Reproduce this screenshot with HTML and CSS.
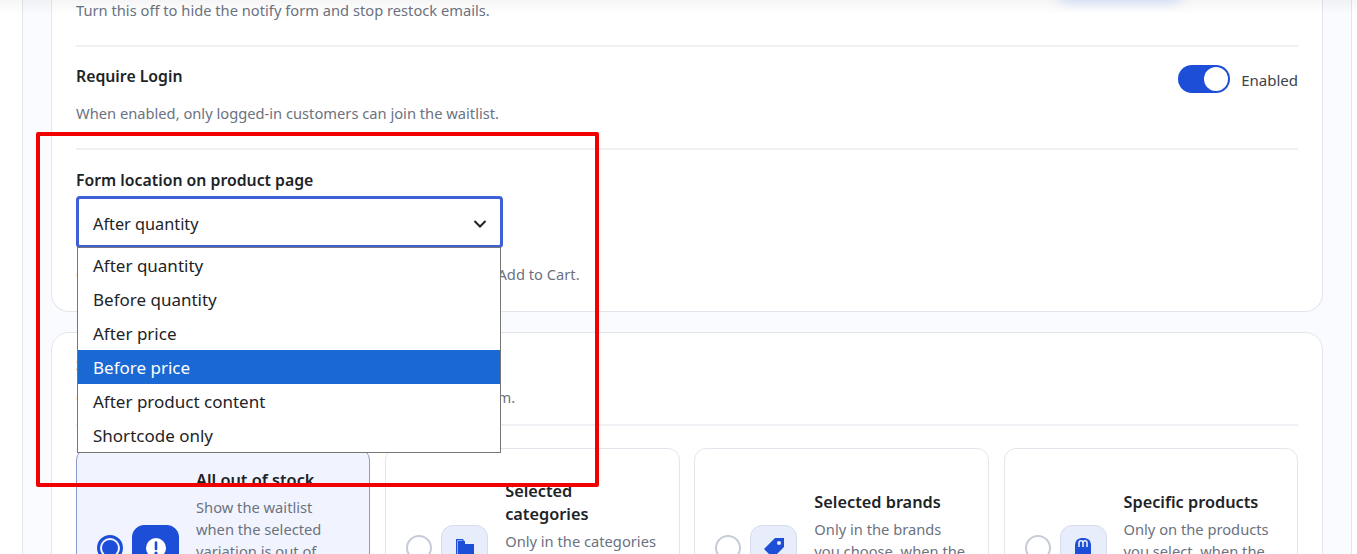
FILE: index.html
```html
<!DOCTYPE html>
<html>
<head>
<title>Waitlist Settings</title>
<link rel="stylesheet" href="styles.css">
</head>
<body>
<div class='top-fade'></div>
<div class='top-glow'></div>
<div class='panel'>
	<section class='card card-first'>
		<div class='row row-first'>
			<p class='desc'>Turn this off to hide the notify form and stop restock emails.</p>
		</div>
		<div class='row row-login'>
			<div class='row-head'>
				<h3 class='title'>Require Login</h3>
				<div class='switch-wrap'>
					<span class='switch'><span class='knob'></span></span>
					<span class='switch-label'>Enabled</span>
				</div>
			</div>
			<p class='desc'>When enabled, only logged-in customers can join the waitlist.</p>
		</div>
		<div class='row row-form'>
			<h3 class='title'>Form location on product page</h3>
			<div class='select-wrap'>
				<div class='select'>
					<span>After quantity</span>
					<svg class='chevron' width='16' height='16' viewBox='0 0 16 16'><path d='M2.5 5 8 10.500 13.500 5' fill='none' stroke='#1d2327' stroke-width='2'/></svg>
				</div>
				<ul class='options'>
					<li>After quantity</li>
					<li>Before quantity</li>
					<li>After price</li>
					<li class='active'>Before price</li>
					<li>After product content</li>
					<li>Shortcode only</li>
				</ul>
			</div>
			<p class='desc help'>Choose where the notify form shows, for example just above Add to Cart.</p>
		</div>
	</section>
	<section class='card card-second'>
		<div class='row row-scope'>
			<h3 class='title'>Show the waitlist for</h3>
			<p class='desc'>Choose which out-of-stock products can display the notify form.</p>
		</div>
		<div class='choices'>
			<div class='choice selected'>
				<span class='radio'></span>
				<span class='icon'>
					<svg width='20' height='20' viewBox='0 0 20 20'><circle cx='10' cy='10' r='10' fill='#fff'/><path d='M10 4.500v6.500' stroke='#1d4ed8' stroke-width='2.600' stroke-linecap='round'/><circle cx='10' cy='15' r='1.600' fill='#1d4ed8'/></svg>
				</span>
				<div class='choice-text'>
					<h4>All out of stock</h4>
					<p>Show the waitlist when the selected variation is out of stock on any product anywhere in your whole store.</p>
				</div>
			</div>
			<div class='choice'>
				<span class='radio'></span>
				<span class='icon'>
					<svg width='20' height='20' viewBox='0 0 20 20'><path d='M1 1h7l1 2h1v3h9v13H4V16H1z' fill='#1d4ed8'/><path d='M2.500 16V2.500h5' fill='none' stroke='#e8edfb' stroke-width='.6'/></svg>
				</span>
				<div class='choice-text'>
					<h4>Selected categories</h4>
					<p>Only in the categories you pick, when the product is out of stock.</p>
				</div>
			</div>
			<div class='choice'>
				<span class='radio'></span>
				<span class='icon'>
					<svg width='22' height='22' viewBox='0 0 22 22'><path d='M12 1h9v9L10 21 1 12z' fill='#1d4ed8'/><circle cx='16' cy='6' r='2' fill='#e8edfb'/></svg>
				</span>
				<div class='choice-text'>
					<h4>Selected brands</h4>
					<p>Only in the brands you choose, when the product is out of stock.</p>
				</div>
			</div>
			<div class='choice'>
				<span class='radio'></span>
				<span class='icon'>
					<svg width='18' height='22' viewBox='0 0 18 22'><path d='M1 9c0-6 3-8 8-8s8 2 8 8v12H1z' fill='#1d4ed8'/><path d='M5 10V6c0-3 4-3 4 0v4M9 10V6c0-3 4-3 4 0v4' fill='none' stroke='#e8edfb' stroke-width='1.600'/></svg>
				</span>
				<div class='choice-text'>
					<h4>Specific products</h4>
					<p>Only on the products you select, when the variation is out of stock.</p>
				</div>
			</div>
		</div>
	</section>
</div>
<div class='red-box'></div>
</body>
</html>
```

FILE: styles.css
```css
html, body {
	margin: 0;
	height: 554px;
	overflow: hidden;
	background: #fff;
}
body {
	position: relative;
	font-family: "Noto Sans", "Liberation Sans", sans-serif;
	color: #1d2327;
}
h3, h4, p, ul {
	margin: 0;
	padding: 0;
}
.panel {
	width: 1330px;
	height: 700px;
	margin-left: 22px;
	box-sizing: border-box;
	padding: 0 28px;
	background: #fafbfe;
	border-left: 1px solid #e3e6ec;
	border-right: 1px solid #e3e6ec;
}
.card {
	background: #fff;
	border: 1px solid #e3e6ec;
	border-radius: 18px;
	padding: 0 24px;
}
.card-first {
	border-top: 0;
	border-top-left-radius: 0;
	border-top-right-radius: 0;
	padding-bottom: 26px;
}
.card-second {
	margin-top: 20px;
	height: 400px;
}
.row {
	border-bottom: 2px solid #eef0f3;
}
.row-first {
	margin-top: -1px;
	padding-bottom: 24px;
}
.row-login {
	padding: 18px 0 24px;
}
.row-form {
	padding-top: 19px;
	border-bottom: 0;
}
.row-scope {
	padding: 21px 0 16px;
}
.row-head {
	display: flex;
	justify-content: space-between;
	height: 37px;
}
.title {
	font-size: 15.800px;
	font-weight: 600;
	line-height: 22px;
}
.desc {
	font-size: 14.700px;
	line-height: 22px;
	color: #6b7280;
}
.row-scope .desc {
	margin-top: 10px;
}
.switch-wrap {
	display: flex;
	align-items: flex-start;
	gap: 11px;
}
.switch {
	display: flex;
	justify-content: flex-end;
	width: 48px;
	height: 24px;
	padding: 2px;
	border-radius: 14px;
	background: #1d4ed8;
}
.knob {
	width: 24px;
	height: 24px;
	border-radius: 50%;
	background: #fff;
}
.switch-label {
	font-size: 15px;
	line-height: 30px;
	color: #3c434a;
}
.select-wrap {
	position: relative;
	width: 427px;
	margin-top: 5px;
}
.select {
	display: flex;
	justify-content: space-between;
	align-items: center;
	box-sizing: border-box;
	height: 52px;
	padding: 3px 12px 0 14px;
	border: 3px solid #3f5fd8;
	border-radius: 4px;
	font-size: 16.300px;
	background: #fff;
}
.options {
	position: absolute;
	top: 51px;
	left: 1px;
	width: 424px;
	box-sizing: border-box;
	list-style: none;
	background: #fff;
	border: 1px solid #767676;
	font-size: 17px;
	z-index: 2;
}
.options li {
	height: 34px;
	line-height: 36px;
	padding-left: 15px;
}
.options .active {
	background: #1a68d3;
	color: #fff;
}
.help {
	margin-top: 15px;
}
.choices {
	display: grid;
	grid-template-columns: repeat(4, 1fr);
	gap: 14.700px;
	margin-top: 22px;
}
.choice {
	display: flex;
	align-items: center;
	box-sizing: border-box;
	height: 200px;
	padding: 0 20px;
	border: 1px solid #e3e6ec;
	border-radius: 12px;
}
.choice.selected {
	background: #f1f4fe;
	border-color: #8a9bc9;
}
.radio {
	flex: none;
	box-sizing: border-box;
	width: 26px;
	height: 26px;
	border: 2px solid #c5ccd8;
	border-radius: 50%;
	background: #fff;
}
.selected .radio {
	border: 3px solid #1d4ed8;
	padding: 2px;
	background: #1d4ed8;
	background-clip: content-box;
}
.icon {
	flex: none;
	display: flex;
	align-items: center;
	justify-content: center;
	box-sizing: border-box;
	width: 47px;
	height: 47px;
	margin: 0 17px 0 9px;
	border: 1px solid #d5dcee;
	border-radius: 12px;
	background: #e8edfb;
}
.selected .icon {
	background: #1d4ed8;
	border-color: #1d4ed8;
}
.choice-text {
	min-width: 0;
	padding-top: 1px;
}
.choice-text h4 {
	font-size: 16.300px;
	font-weight: 600;
	line-height: 23px;
	margin-bottom: 4px;
}
.choice-text p {
	font-size: 14.700px;
	line-height: 22px;
	color: #6b7280;
}
.red-box {
	position: absolute;
	left: 36px;
	top: 132px;
	width: 555px;
	height: 347px;
	border: 4px solid #f00000;
	border-radius: 2px;
	z-index: 5;
}
.top-fade {
	position: absolute;
	top: 0;
	left: 0;
	right: 0;
	height: 14px;
	background: linear-gradient(rgba(0, 0, 0, .04), rgba(0, 0, 0, 0));
	z-index: 4;
}
.top-glow {
	position: absolute;
	top: -12px;
	left: 1060px;
	width: 120px;
	height: 14px;
	background: #c9d6f6;
	filter: blur(6px);
	z-index: 4;
}
```
